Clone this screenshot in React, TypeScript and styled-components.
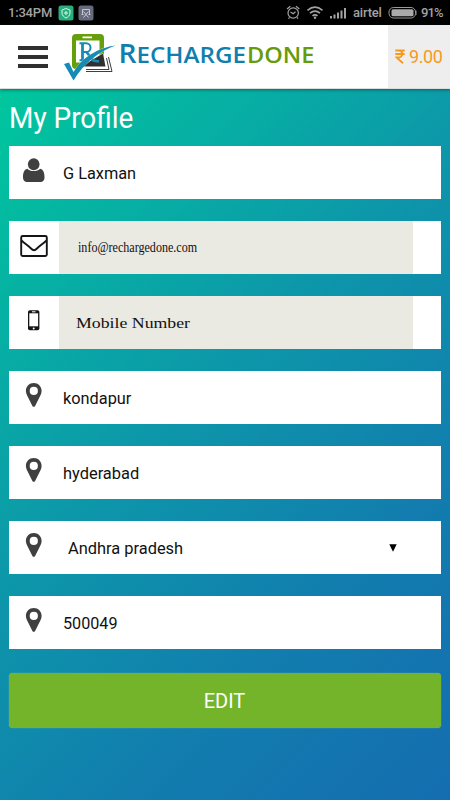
import React from "react";
import styled, { createGlobalStyle } from "styled-components";

const GlobalStyle = createGlobalStyle`
  *, *::before, *::after { box-sizing: border-box; }
  body { margin: 0; font-family: Roboto, sans-serif; background: #1470b0; }
`;

const Screen = styled.div`
  width: 450px;
  height: 800px;
  display: flex;
  flex-direction: column;
  overflow: hidden;
`;

const StatusBar = styled.div`
  height: 25px;
  flex: none;
  display: flex;
  justify-content: space-between;
  background: #000;
  color: #a3a3a3;
  font-weight: 500;
  font-size: 13px;
  line-height: 25px;
`;

const StatusGroup = styled.div`
  display: flex;
  align-items: center;
  svg { display: block; flex: none; }
`;

const StatusText = styled.span<{ $left: number; $width: number; $spacing?: number }>`
  margin-left: ${(p) => p.$left}px;
  width: ${(p) => p.$width}px;
  letter-spacing: ${(p) => p.$spacing ?? 0}px;
  white-space: nowrap;
`;

const Header = styled.header`
  height: 64px;
  flex: none;
  display: flex;
  background: #fff;
  z-index: 1;
  border-bottom: 1px solid #d9dedd;
  box-shadow: 0 1px 3px rgba(0, 50, 50, 0.55);
`;

const MenuButton = styled.button`
  width: 30px;
  height: 22px;
  margin: 21px 0 0 18px;
  padding: 0;
  border: 0;
  background: none;
  display: flex;
  flex-direction: column;
  justify-content: space-between;
`;

const MenuLine = styled.span`
  height: 4px;
  background: #303030;
`;

const Logo = styled.svg`
  display: block;
  margin-left: 12px;
`;

const Balance = styled.div`
  width: 62px;
  margin-left: auto;
  padding-left: 7px;
  display: flex;
  align-items: center;
  gap: 4px;
  background: #eee;
  color: #f8991d;
  font-size: 18px;
  letter-spacing: -0.4px;
`;

const Main = styled.main`
  flex: 1;
  padding: 0 9px;
  background: linear-gradient(135deg, #00c79d 0%, #0d96aa 44%, #127dae 72%, #156db0 100%);
`;

const Title = styled.h1`
  height: 57px;
  margin: 0;
  padding-top: 11px;
  color: #fff;
  font-weight: 400;
  font-size: 29px;
  line-height: 36px;
  transform: scaleX(0.963);
  transform-origin: left;
`;

const Fields = styled.div`
  display: flex;
  flex-direction: column;
  gap: 22px;
`;

const Field = styled.div`
  height: 53px;
  display: flex;
  background: #fff;
`;

const IconCell = styled.div`
  width: 50px;
  flex: none;
  svg { display: block; }
`;

const Value = styled.div<{ $inset: number; $muted?: boolean }>`
  width: 354px;
  height: 53px;
  padding-left: ${(p) => p.$inset}px;
  background: ${(p) => (p.$muted ? "#eae9e2" : "#fff")};
  color: #111;
  font-size: 16px;
  line-height: ${(p) => (p.$muted ? 54 : 55)}px;
  display: flex;
  justify-content: space-between;
`;

const Scaled = styled.span<{ $serif?: boolean; $size?: number; $scale: number }>`
  display: inline-block;
  font-family: ${(p) => (p.$serif ? '"Liberation Serif", serif' : "Roboto, sans-serif")};
  font-size: ${(p) => p.$size ?? 16}px;
  transform: scaleX(${(p) => p.$scale});
  transform-origin: left;
  white-space: nowrap;
`;

const Caret = styled.svg`
  display: block;
  margin: 23px 16px 0 0;
`;

const EditButton = styled.button`
  display: block;
  width: 432px;
  height: 55px;
  margin: 24px 0 0;
  padding: 1px 1px 0 0;
  border: 0;
  border-radius: 4px;
  background: #74b42b;
  box-shadow: 0 0 1px #a2ca79;
  color: #fff;
  font: 400 20px Roboto, sans-serif;
`;

function UserIcon() {
  return (
    <svg width="50" height="53" viewBox="0 0 50 53" fill="#404040">
      <ellipse cx="24.700" cy="18.200" rx="5.800" ry="6" />
      <path d="M18.200 22.800C15 23.500 14 27 14 31.500c0 3 1.700 4.400 4 4.400h13.500c2.400 0 4-1.400 4-4.400 0-4.500-1-8-4.200-8.700-1.700 1.500-4 2.300-6.600 2.300s-4.800-.8-6.500-2.300z" />
    </svg>
  );
}

function MailIcon() {
  return (
    <svg width="50" height="53" viewBox="0 0 50 53" fill="none" stroke="#151515" strokeWidth="1.900">
      <rect x="12.200" y="15" width="25.600" height="20" rx="1.500" />
      <path d="M12.500 19.500c3.500 3.300 6 4.800 9 7.500 1.400 1.300 2.300 2.200 3.500 2.200s2.100-.9 3.500-2.200c3-2.700 5.500-4.200 9-7.500" />
    </svg>
  );
}

function PhoneIcon() {
  return (
    <svg width="50" height="53" viewBox="0 0 50 53">
      <rect x="19" y="14.300" width="11.400" height="20" rx="1.800" fill="#151515" />
      <rect x="20.300" y="17.300" width="8.800" height="13" fill="#fff" />
      <path d="M23 15.800h3.500" stroke="#fff" />
      <circle cx="24.700" cy="32.400" r="1" fill="#fff" />
    </svg>
  );
}

function PinIcon() {
  return (
    <svg width="50" height="53" viewBox="0 0 50 53" fill="#404040">
      <path
        fillRule="evenodd"
        d="M24.800 12c-4.500 0-7.900 3.500-7.900 7.800 0 1.500.4 2.800 1 4.100l5.500 11c.6 1.200 2.100 1.200 2.700 0l5.500-11c.7-1.300 1-2.600 1-4.100 0-4.300-3.400-7.800-7.800-7.800zm0 3.800a4.100 4.100 0 1 1 0 8.200 4.100 4.100 0 0 1 0-8.200z"
      />
    </svg>
  );
}

function BrandLogo() {
  return (
    <Logo width="260" height="63" viewBox="60 25 260 63">
      <path
        fillRule="evenodd"
        fill="#65a00c"
        d="M76 34h24q4 0 4 4v27q0 4-4 4H76q-4 0-4-4V38q0-4 4-4zm0 6.500v22h23.500v-22zM82.500 36.500v1.800h9.500v-1.800z"
      />
      <path d="M81 66l22-13 9.500 19H82z" fill="#fff" />
      <path d="M108.500 57l3.500 14.500H86M106.500 58l2.500 11.500H86" fill="none" stroke="#292929" strokeWidth=".9" />
      <path d="M103 53.500l2.500 13H81z" fill="#303030" />
      <g fill="none" stroke="#168cb5">
        <path d="M82.500 43.500v17" strokeWidth="2.800" />
        <path d="M79.500 43.300H86c6 0 6 8.700 0 8.700h-3M79.500 60.300h6" strokeWidth="2" />
        <path d="M86 51.500l7.500 9 5.500 1" strokeWidth="2.700" />
      </g>
      <path d="M64 64l5-1.500 4.500 9.500C82 57 99 47.500 115.500 45.500 99 51.500 84 63 73.500 80.500z" fill="#168cb5" stroke="#fff" strokeWidth=".5" paintOrder="stroke" />
      <g fontFamily="Open Sans, sans-serif" fontWeight="600">
        <text x="118.500" y="63" fontSize="27" fill="#0f7fad" textLength="18" lengthAdjust="spacingAndGlyphs">R</text>
        <text x="136.500" y="63" fontSize="21" fill="#0f7fad" textLength="109.500" lengthAdjust="spacingAndGlyphs">ECHARGE</text>
        <text x="247" y="63" fontSize="21" fill="#679b0b" textLength="67.500" lengthAdjust="spacingAndGlyphs">DONE</text>
      </g>
    </Logo>
  );
}

function NotificationIcons() {
  return (
    <svg width="36" height="16" viewBox="58 4.500 36 16" fill="none">
      <rect x="58.500" y="5" width="15" height="15" rx="2.500" fill="#28ad7d" />
      <path d="M66 8l4 1.500v3c0 2.500-2 4-4 5-2-1-4-2.500-4-5v-3zM66 10.500v4M64 12.500h4" stroke="#d4f6e9" />
      <rect x="78.500" y="5" width="15" height="15" rx="2.500" fill="#656a7d" />
      <path d="M82.500 14V9h7v5M83.500 17l5-6M88.500 17l-5-6M81.500 14h2m5 0h2" stroke="#c5c9d3" />
    </svg>
  );
}

function SignalIcons() {
  return (
    <svg width="62" height="20" viewBox="286 2.500 62 20" fill="none" stroke="#a3a3a3">
      <circle cx="293.200" cy="12.500" r="5.200" strokeWidth="1.200" />
      <path d="M290.500 11.500l2.700 1.800 2.300-2M287 8.500l3.300-2.700M296 5.800l3.300 2.700M289.500 17l-1 1.200M297 17l1 1.200" strokeWidth="1.200" />
      <path d="M307.500 9.800q7.500-6.500 15 0M310 12.700q5-4.300 10 0M312.500 15.400q2.500-2.200 5 0" strokeWidth="1.600" />
      <circle cx="315" cy="17.200" r="1.200" fill="#a3a3a3" stroke="none" />
      <path d="M331 15.500V18M334.500 14V18M338 12V18M341.500 10V18M345 7.500V18" strokeWidth="2" />
    </svg>
  );
}

function BatteryIcon() {
  return (
    <svg width="29" height="13" viewBox="388 6 29 13">
      <rect x="389" y="7.500" width="26.500" height="10.500" rx="4.500" fill="none" stroke="#999" />
      <rect x="391.500" y="9.300" width="22" height="7" rx="1.500" fill="#aaa" />
      <path d="M416 10.500v4.500" stroke="#999" />
    </svg>
  );
}

function RupeeIcon() {
  return (
    <svg width="10" height="15" viewBox="0 0 10 15" fill="none" stroke="#f8991d" strokeWidth="1.900">
      <path d="M.3 1.500h9.400M.3 5h9.400M1 1.500h2.500c5 0 5 7 0 7H1.700l6.300 5.700" />
    </svg>
  );
}

type FieldData = {
  icon: React.ReactNode;
  text: string;
  inset: number;
  scale: number;
  size?: number;
  muted?: boolean;
  select?: boolean;
};

const fields: FieldData[] = [
  { icon: <UserIcon />, text: "G Laxman", inset: 3.5, scale: 1.02 },
  { icon: <MailIcon />, text: "info@rechargedone.com", inset: 19, scale: 0.862, size: 14, muted: true },
  { icon: <PhoneIcon />, text: "Mobile Number", inset: 17, scale: 1.185, size: 15, muted: true },
  { icon: <PinIcon />, text: "kondapur", inset: 3.5, scale: 1.02 },
  { icon: <PinIcon />, text: "hyderabad", inset: 3.5, scale: 1.025 },
  { icon: <PinIcon />, text: "Andhra pradesh", inset: 8.5, scale: 1.025, select: true },
  { icon: <PinIcon />, text: "500049", inset: 3.5, scale: 1.01 },
];

export default function App() {
  return (
    <>
      <GlobalStyle />
      <Screen>
        <StatusBar>
          <StatusGroup>
            <StatusText $left={8} $width={50} $spacing={-0.2}>1:34PM</StatusText>
            <NotificationIcons />
          </StatusGroup>
          <StatusGroup>
            <SignalIcons />
            <StatusText $left={5} $width={35} $spacing={-0.2}>airtel</StatusText>
            <BatteryIcon />
            <StatusText $left={4} $width={29} $spacing={-0.9}>91%</StatusText>
          </StatusGroup>
        </StatusBar>
        <Header>
          <MenuButton aria-label="Menu">
            <MenuLine />
            <MenuLine />
            <MenuLine />
          </MenuButton>
          <BrandLogo />
          <Balance>
            <RupeeIcon />
            <span>9.00</span>
          </Balance>
        </Header>
        <Main>
          <Title>My Profile</Title>
          <Fields>
            {fields.map((f) => (
              <Field key={f.text}>
                <IconCell>{f.icon}</IconCell>
                <Value $inset={f.inset} $muted={f.muted}>
                  <Scaled $serif={f.muted} $size={f.size} $scale={f.scale}>{f.text}</Scaled>
                  {f.select && (
                    <Caret width="8" height="8" viewBox="0 0 8 8">
                      <path d="M.3.300h7.400L4 7.700z" fill="#000" />
                    </Caret>
                  )}
                </Value>
              </Field>
            ))}
          </Fields>
          <EditButton>EDIT</EditButton>
        </Main>
      </Screen>
    </>
  );
}
